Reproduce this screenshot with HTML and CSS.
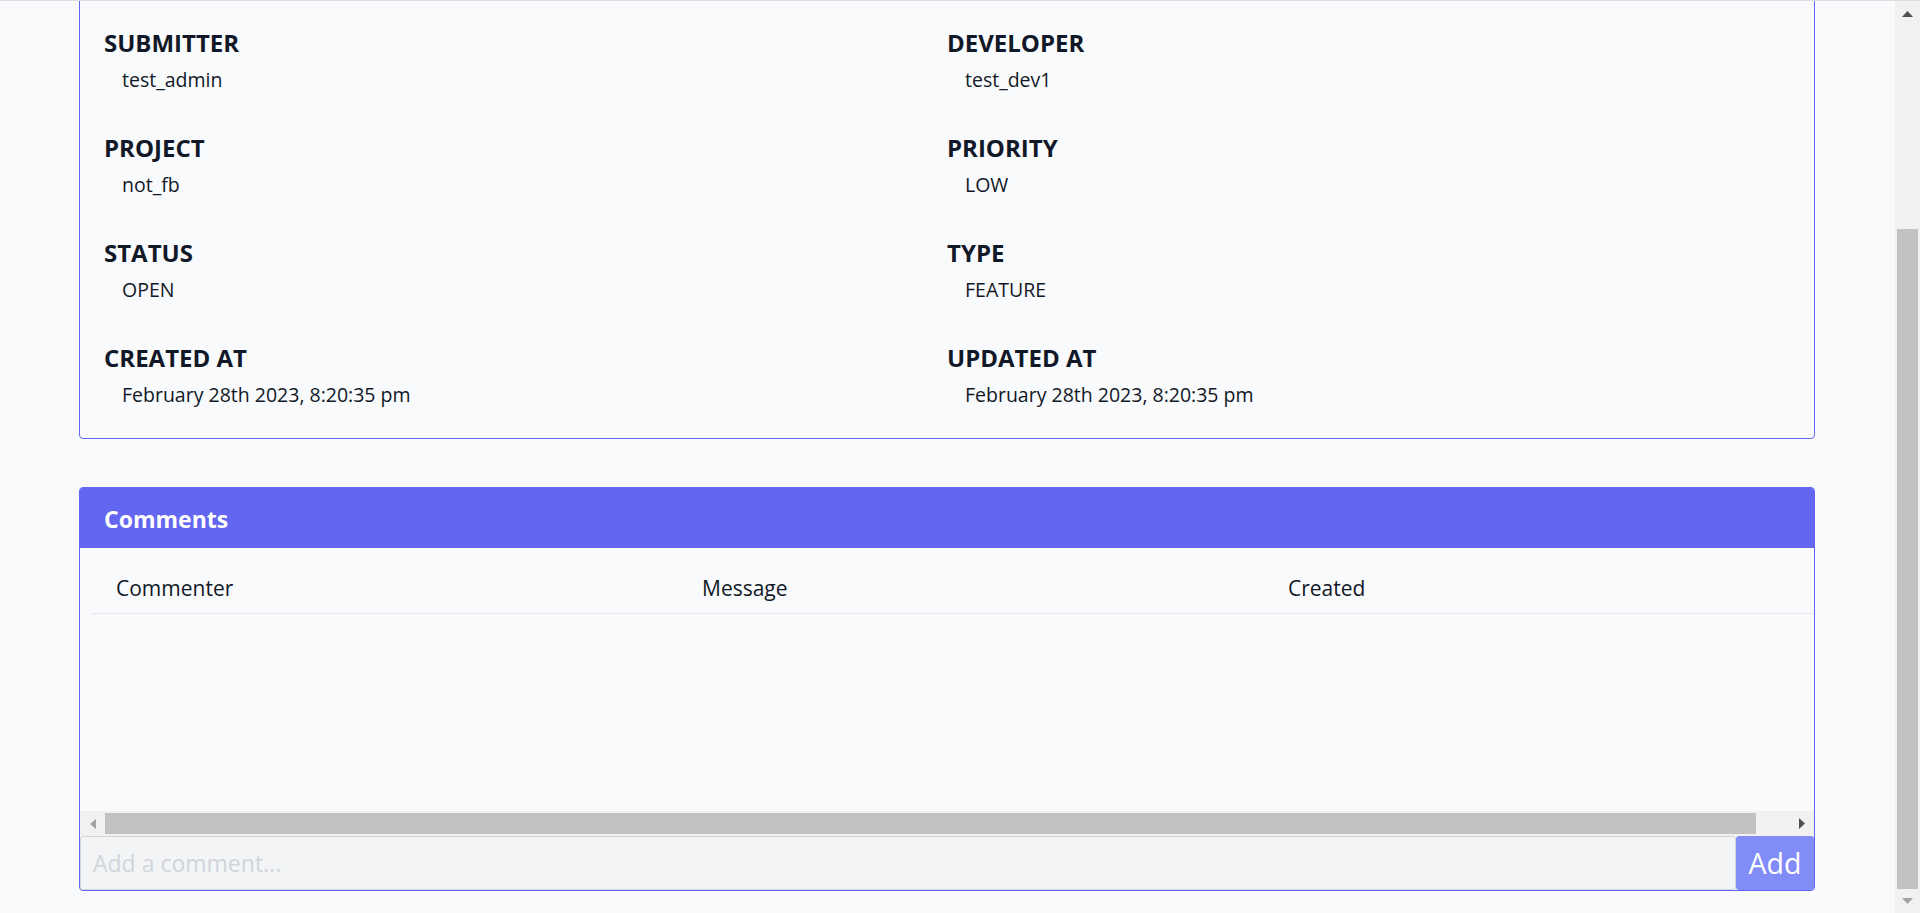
FILE: index.html
```html
<!DOCTYPE html>
<html lang="en">
<head>
<meta charset="utf-8">
<title>Ticket details</title>
<link rel="stylesheet" href="styles.css">
</head>
<body>
<div class="frame">
  <div class="viewport">
    <main class="page">
      <section class="card details">
        <div class="fields">
          <div class="field"><div class="label">SUBMITTER</div><div class="value">test_admin</div></div>
          <div class="field"><div class="label">DEVELOPER</div><div class="value">test_dev1</div></div>
          <div class="field"><div class="label">PROJECT</div><div class="value">not_fb</div></div>
          <div class="field"><div class="label">PRIORITY</div><div class="value">LOW</div></div>
          <div class="field"><div class="label">STATUS</div><div class="value">OPEN</div></div>
          <div class="field"><div class="label">TYPE</div><div class="value">FEATURE</div></div>
          <div class="field"><div class="label">CREATED AT</div><div class="value">February 28th 2023, 8:20:35 pm</div></div>
          <div class="field"><div class="label">UPDATED AT</div><div class="value">February 28th 2023, 8:20:35 pm</div></div>
        </div>
      </section>
      <section class="card comments">
        <div class="card-head">Comments</div>
        <div class="table-wrap">
          <table class="comment-table">
            <thead>
              <tr><th>Commenter</th><th>Message</th><th>Created</th></tr>
            </thead>
            <tbody></tbody>
          </table>
        </div>
        <div class="hscroll" aria-hidden="true">
          <div class="sb-btn">
            <svg width="6" height="10" viewBox="0 0 6 10"><path d="M0 5L6 0V10Z" fill="#a3a3a3"/></svg>
          </div>
          <div class="hs-track"><div class="hs-thumb"></div></div>
          <div class="sb-btn">
            <svg width="6" height="11" viewBox="0 0 6 11"><path d="M6 5.5L0 0V11Z" fill="#505050"/></svg>
          </div>
        </div>
        <form class="add-row">
          <input class="add-input" type="text" placeholder="Add a comment...">
          <button class="add-btn" type="button">Add</button>
        </form>
      </section>
    </main>
  </div>
  <div class="vscroll" aria-hidden="true">
    <div class="vs-btn vs-up">
      <svg width="11" height="6" viewBox="0 0 11 6"><path d="M5.5 0L11 6H0Z" fill="#505050"/></svg>
    </div>
    <div class="vs-track"><div class="vs-thumb"></div></div>
    <div class="vs-btn vs-down">
      <svg width="11" height="6" viewBox="0 0 11 6"><path d="M5.5 6L11 0H0Z" fill="#a3a3a3"/></svg>
    </div>
  </div>
</div>
</body>
</html>
```
FILE: styles.css
```css
html, body {
  margin: 0;
  padding: 0;
}
body {
  background: #f9fafb;
  font-family: "Open Sans", "Noto Sans", sans-serif;
  color: #111827;
  border-top: 1px solid #dcdde0;
  overflow: hidden;
}
.frame {
  display: flex;
  height: 912px;
}
.viewport {
  flex: 1;
  min-width: 0;
  overflow: hidden;
  display: flex;
  flex-direction: column;
  justify-content: flex-end;
}
.page {
  flex-shrink: 0;
  padding: 0 80px 22px 79px;
}
.card {
  border: 1px solid #6366f1;
  border-radius: 4px;
  background: #f9fafb;
  overflow: hidden;
}
.card + .card {
  margin-top: 48px;
}
.card-head {
  height: 60px;
  box-sizing: border-box;
  display: flex;
  align-items: center;
  padding: 2px 24px 0;
  background: #6366f1;
  color: #ffffff;
  font-weight: 700;
  font-size: 23px;
}
.fields {
  display: grid;
  grid-template-columns: 1fr 1fr;
  row-gap: 38px;
  padding: 40px 24px 29px;
}
.label {
  font-size: 24px;
  font-weight: 700;
  line-height: 32px;
  margin-bottom: 7px;
}
.value {
  font-size: 19.5px;
  line-height: 28px;
  padding-left: 18px;
}
.table-wrap {
  height: 263px;
  box-sizing: border-box;
  padding: 12px 0 0 12px;
  overflow: hidden;
}
.comment-table {
  width: 1758px;
  table-layout: fixed;
  border-collapse: collapse;
}
.comment-table th {
  text-align: left;
  font-weight: 400;
  font-size: 21px;
  line-height: 30px;
  padding: 13px 24px 10px;
  border-bottom: 1px solid #e5e7eb;
}

/* horizontal scrollbar of the table */
.hscroll {
  display: flex;
  height: 25px;
  background: #f1f1f1;
}
.sb-btn {
  width: 25px;
  flex-shrink: 0;
  display: flex;
  align-items: center;
  justify-content: center;
}
.hs-track {
  flex: 1;
  display: flex;
  align-items: center;
}
.hs-thumb {
  width: 1651px;
  height: 21px;
  background: #c1c1c1;
}

.add-row {
  display: flex;
  height: 54px;
  margin: 0;
}
.add-input {
  flex: 1;
  min-width: 0;
  margin: 0;
  box-sizing: border-box;
  border: 1px solid #d1d5db;
  border-radius: 3px;
  background: #f3f4f6;
  padding: 0 12px;
  font-family: inherit;
  font-size: 23px;
  color: #111827;
}
.add-input::placeholder {
  color: #d1d5db;
}
.add-btn {
  width: 78px;
  margin: 0;
  border: none;
  border-radius: 3px;
  background: #818cf8;
  color: #ffffff;
  font-family: inherit;
  font-size: 28.5px;
  padding: 0;
}

/* page scrollbar */
.vscroll {
  width: 25px;
  flex-shrink: 0;
  display: flex;
  flex-direction: column;
  background: #f1f1f1;
}
.vs-btn {
  display: flex;
  align-items: center;
  justify-content: center;
  flex-shrink: 0;
}
.vs-up {
  height: 25px;
}
.vs-down {
  height: 24px;
}
.vs-track {
  flex: 1;
  display: flex;
  flex-direction: column;
  justify-content: flex-end;
  padding: 0 2px;
}
.vs-thumb {
  height: 660px;
  background: #c1c1c1;
}
```
